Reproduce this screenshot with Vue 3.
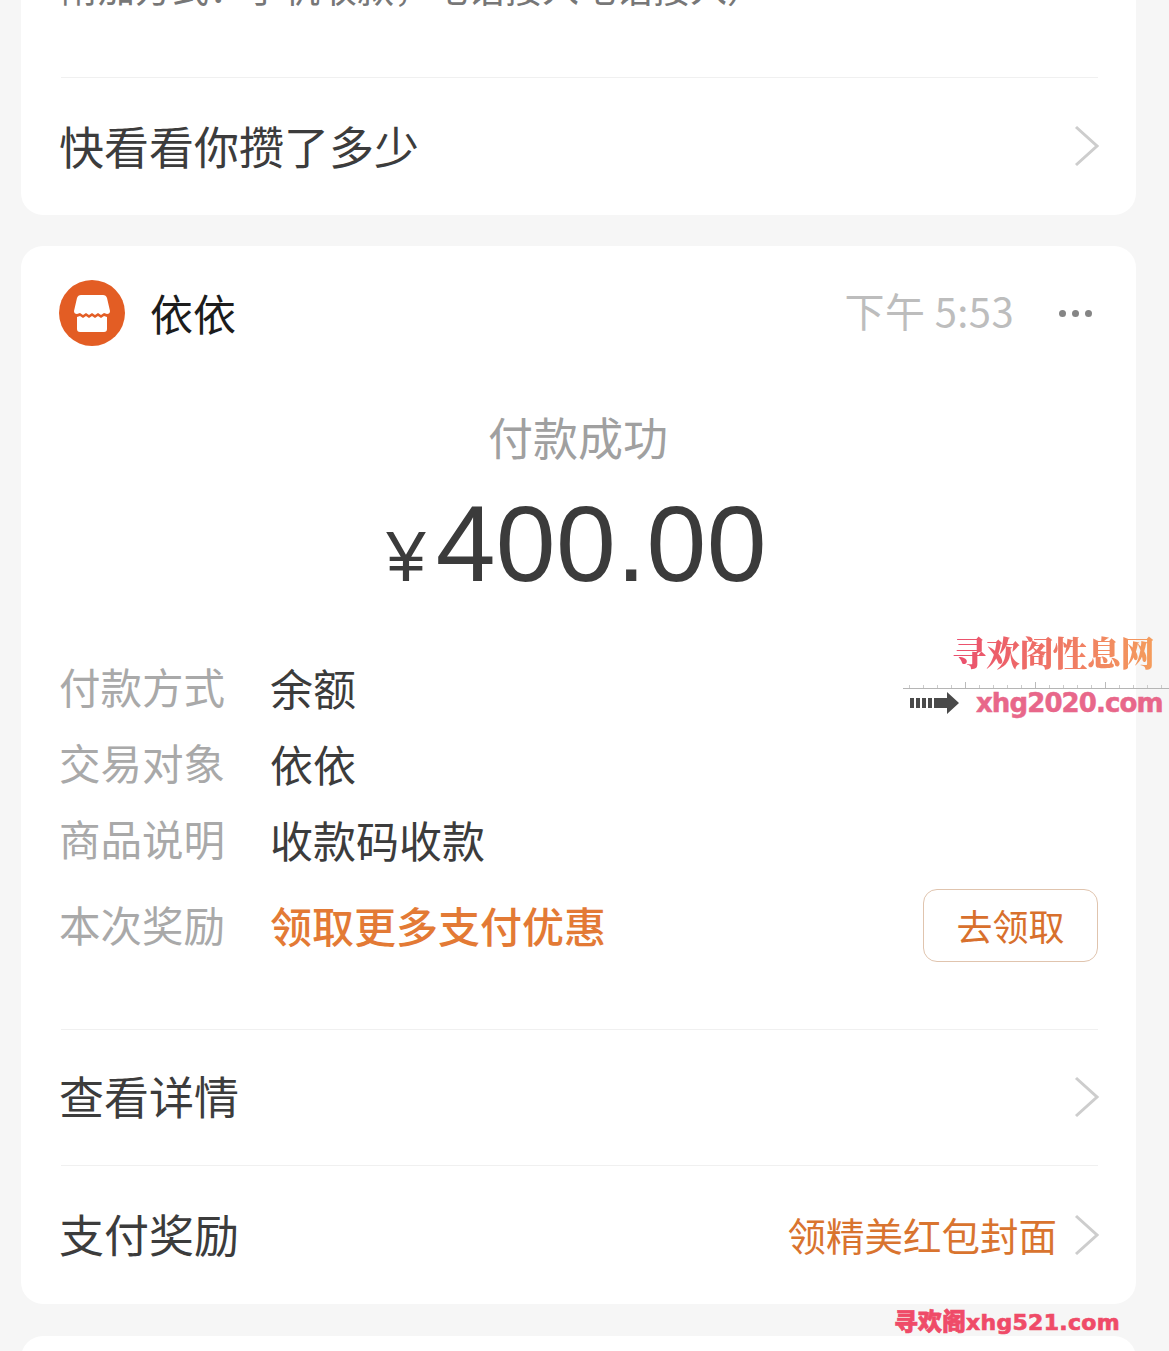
<script setup>
const details = [
  { label: '付款方式', value: '余额' },
  { label: '交易对象', value: '依依' },
  { label: '商品说明', value: '收款码收款' },
]
</script>

<template>
  <div class="page">
    <section class="card card-top">
      <div class="cut-text">附加方式：手机收款，电话接入电话接入）</div>
      <div class="link-row first-row">
        <span class="link-title">快看看你攒了多少</span>
        <svg class="chev" viewBox="0 0 26 42"><path d="M2 2 L23 21 L2 40" /></svg>
      </div>
    </section>

    <section class="card card-main">
      <header class="head">
        <svg class="avatar" viewBox="0 0 66 66">
          <circle cx="33" cy="33" r="33" fill="#e35d24" />
          <path d="M22 15 H44 Q47 15 48 18 L51 31 Q51 34 48 34 L45 33 L42 35 L39 33 L36 35 L33 33 L30 35 L27 33 L24 35 L21 33 L18 34 Q15 34 15 31 L18 18 Q19 15 22 15 Z" fill="#fff" />
          <path d="M18 37 L21 36 L24 38 L27 36 L30 38 L33 36 L36 38 L39 36 L42 38 L45 36 L48 37 V49 Q48 52 45 52 H21 Q18 52 18 49 Z" fill="#fff" />
        </svg>
        <span class="name">依依</span>
        <span class="time">下午 5:53</span>
        <span class="dots"><i></i><i></i><i></i></span>
      </header>

      <div class="status">付款成功</div>
      <div class="amount"><span class="yen">¥</span><span class="num">400.00</span></div>

      <div class="details">
        <div v-for="d in details" :key="d.label" class="detail">
          <span class="label">{{ d.label }}</span>
          <span class="value">{{ d.value }}</span>
        </div>
        <div class="detail reward">
          <span class="label">本次奖励</span>
          <span class="value orange">领取更多支付优惠</span>
          <span class="btn">去领取</span>
        </div>
      </div>

      <div class="link-row detail-row">
        <span class="link-title">查看详情</span>
        <svg class="chev" viewBox="0 0 26 42"><path d="M2 2 L23 21 L2 40" /></svg>
      </div>
      <div class="link-row reward-row">
        <span class="link-title">支付奖励</span>
        <span class="extra">领精美红包封面</span>
        <svg class="chev" viewBox="0 0 26 42"><path d="M2 2 L23 21 L2 40" /></svg>
      </div>
    </section>

    <section class="card card-next"></section>

    <div class="wm wm-side">
      <div class="wm-title">寻欢阁性息网</div>
      <div class="wm-ruler"></div>
      <div class="wm-url-row">
        <svg class="wm-arrow" viewBox="0 0 50 22">
          <path d="M0 6h4v10H0zM6 6h4v10H6zM12 6h4v10h-4zM18 6h4v10h-4zM24 6h13V0l12 11-12 11v-6H24z" fill="#4a4a4a" />
        </svg>
        <span class="wm-url">xhg2020.com</span>
      </div>
    </div>
    <div class="wm-bottom">寻欢阁<span class="wm-bottom-url">xhg521.com</span></div>
  </div>
</template>

<style>
html, body { margin: 0; background: #f6f6f6; }
</style>

<style scoped>
.page {
  position: relative;
  width: 1169px;
  height: 1351px;
  overflow: hidden;
  background: #f6f6f6;
  font-family: "Noto Sans CJK SC", "Liberation Sans", sans-serif;
}
.card {
  margin: 0 33px 0 21px;
  background: #fff;
  border-radius: 22px;
}
.card-top {
  height: 215px;
  padding: 0 38px 0 40px;
  box-sizing: border-box;
  border-radius: 0 0 22px 22px;
  overflow: hidden;
}
.cut-text {
  height: 103px;
  margin-top: -26px;
  font-size: 37px;
  line-height: 26px;
  color: #777;
  white-space: nowrap;
}
.link-row {
  display: flex;
  align-items: center;
  border-top: 1px solid #f0f0f0;
}
.first-row { height: 137px; }
.link-title {
  font-size: 45px;
  line-height: 1;
  color: #3c3c3c;
  flex: 1;
  margin: 0 0 4px -2px;
}
.first-row .link-title { margin-bottom: 2px; }
.chev {
  width: 26px;
  height: 42px;
  margin-right: -2px;
  flex: none;
}
.first-row .chev,
.detail-row .chev { margin-bottom: 2px; }
.chev path {
  fill: none;
  stroke: #cdcdcd;
  stroke-width: 3;
}
.card-main {
  margin-top: 31px;
  height: 1058px;
  padding: 0 38px 0 40px;
  box-sizing: border-box;
}
.head {
  display: flex;
  align-items: center;
  height: 134px;
}
.avatar {
  width: 66px;
  height: 66px;
  margin-left: -2px;
  flex: none;
}
.name {
  margin: 0 0 2px 25px;
  font-size: 43px;
  line-height: 1;
  color: #1c1c1c;
  flex: 1;
}
.time {
  font-size: 40px;
  line-height: 1;
  color: #bdbdbd;
  letter-spacing: 0.4px;
  margin-bottom: 6px;
}
.dots {
  display: flex;
  gap: 6px;
  margin-left: 45px;
  margin-right: 6px;
}
.dots i {
  width: 7px;
  height: 7px;
  border-radius: 50%;
  background: #858585;
}
.status {
  margin-top: 29px;
  margin-left: -3px;
  text-align: center;
  font-size: 45px;
  line-height: 56px;
  color: #a0a0a0;
}
.amount {
  display: flex;
  justify-content: center;
  align-items: baseline;
  height: 104px;
  margin-top: 27px;
  padding-right: 6px;
  color: #3b3b3b;
  font-family: "Liberation Sans", sans-serif;
}
.yen { font-size: 71px; line-height: 104px; margin-right: 10px; }
.num { font-size: 107.5px; line-height: 104px; letter-spacing: 0.4px; }
.details { margin-top: 53px; margin-left: -2px; }
.detail {
  display: flex;
  align-items: center;
  height: 76px;
}
.label {
  width: 211px;
  flex: none;
  font-size: 41.5px;
  line-height: 1;
  color: #a9a9a9;
}
.value {
  flex: 1;
  font-size: 43px;
  line-height: 1;
  color: #3c3c3c;
}
.orange { color: #e37a35; font-size: 42px; font-weight: 500; }
.reward {
  height: 96px;
}
.btn {
  width: 173px;
  height: 71px;
  flex: none;
  display: flex;
  align-items: center;
  justify-content: center;
  border: 1.5px solid #e0c4ae;
  border-radius: 14px;
  font-size: 36px;
  color: #d8702d;
}
.detail-row {
  height: 135px;
  margin-top: 56px;
}
.reward-row { height: 138px; }
.extra {
  font-size: 38.5px;
  line-height: 1;
  color: #d9742f;
  margin: 0 17px 2px 0;
}
.card-next {
  margin-top: 32px;
  height: 60px;
}
.wm {
  position: absolute;
  left: 903px;
  top: 631px;
  width: 266px;
}
.wm-title {
  margin-left: 49px;
  font-family: "Noto Serif CJK SC", "Noto Sans CJK SC", serif;
  font-size: 34.2px;
  font-weight: 900;
  line-height: 42px;
  letter-spacing: -0.5px;
  white-space: nowrap;
  background: linear-gradient(90deg, #ea4d6e, #f5a35b);
  -webkit-background-clip: text;
  background-clip: text;
  color: transparent;
}
.wm-ruler {
  height: 6px;
  margin-top: 9px;
  border-bottom: 1px solid #b5b5b5;
  background:
    repeating-linear-gradient(90deg, #bbb 0 1px, transparent 1px 70px) 62px 0 / 100% 100% no-repeat,
    repeating-linear-gradient(90deg, #ccc 0 1px, transparent 1px 14px) 6px 3px / 100% 3px no-repeat;
}
.wm-url-row {
  display: flex;
  align-items: center;
  height: 28px;
}
.wm-arrow {
  width: 50px;
  height: 22px;
  margin-left: 7px;
  flex: none;
}
.wm-url {
  margin-left: 16px;
  font-family: "DejaVu Sans", sans-serif;
  font-size: 26px;
  font-weight: 700;
  line-height: 28px;
  letter-spacing: -0.9px;
  color: #e8678a;
  -webkit-text-stroke: 0.5px #e8678a;
}
.wm-bottom {
  position: absolute;
  left: 894px;
  top: 1305px;
  font-family: "Noto Sans CJK SC", "DejaVu Sans", sans-serif;
  font-size: 24px;
  font-weight: 900;
  line-height: 30px;
  color: #ef4b68;
  white-space: nowrap;
  -webkit-text-stroke: 0.7px #ef4b68;
}
.wm-bottom-url {
  font-family: "DejaVu Sans", sans-serif;
  font-size: 22px;
  font-weight: 700;
  letter-spacing: 0.3px;
}
</style>
